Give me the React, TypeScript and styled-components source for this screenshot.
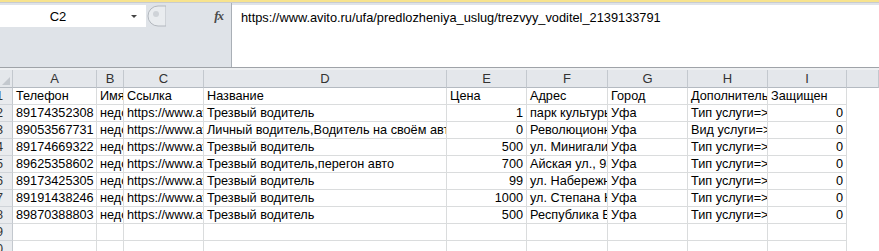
import styled, { createGlobalStyle } from "styled-components";

const GlobalStyle = createGlobalStyle`
    html, body {
        margin: 0;
        padding: 0;
        background: #ffffff;
    }
    body {
        font-family: "Liberation Sans", Arial, sans-serif;
    }
`;

const Page = styled.div`
    width: 879px;
    height: 251px;
    overflow: hidden;
    display: flex;
    flex-direction: column;
    background: #ffffff;
`;

const TopStrip = styled.div`
    height: 2px;
    background: #f7e38e;
    border-bottom: 1px solid #c8cbcf;
    flex: none;
`;

const FormulaBar = styled.div`
    display: grid;
    grid-template-columns: 232px 1fr;
    height: 64px;
    flex: none;
    background: #dfe3e8;
`;

const LeftPanel = styled.div`
    border-right: 1px solid #a9afb6;
    padding-top: 2px;
`;

const NameRow = styled.div`
    display: flex;
    align-items: center;
    height: 22px;
`;

const NameBox = styled.div`
    width: 146px;
    height: 22px;
    background: #ffffff;
    display: flex;
    align-items: center;
    font-size: 13px;
    color: #000;
`;

const NameText = styled.span`
    width: 116px;
    text-align: center;
`;

const DropArrow = styled.span`
    width: 0;
    height: 0;
    margin-left: 15px;
    border-left: 3px solid transparent;
    border-right: 3px solid transparent;
    border-top: 3px solid #444;
`;

const Splitter = styled.svg`
    display: block;
    flex: none;
`;

const Fx = styled.span`
    margin-left: auto;
    margin-right: 8px;
    font-family: "Liberation Serif", serif;
    font-style: italic;
    font-weight: bold;
    font-size: 13px;
    color: #4a4a4a;
    letter-spacing: -1px;
`;

const FormulaInput = styled.div`
    background: #ffffff;
    margin-top: 2px;
    padding: 5px 0 0 9px;
    font-size: 12.8px;
    color: #000;
    white-space: nowrap;
`;

const Divider = styled.div`
    height: 2px;
    flex: none;
    border-top: 1px solid #9fa3a8;
    background: #eef0f2;
`;

const Sheet = styled.div`
    display: grid;
    grid-template-columns: 13px 84px 27px 80px 243px 80px 81px 80px 80px 79px 1fr;
    grid-auto-rows: 17px;
    grid-template-rows: 18px;
    font-size: 12.7px;
`;

const ColHead = styled.div`
    box-sizing: border-box;
    background: #e4e7eb;
    border-right: 1px solid #c3c8ce;
    border-bottom: 1px solid #b4bac1;
    display: flex;
    align-items: center;
    justify-content: center;
    font-size: 13px;
    color: #333;
    overflow: hidden;
`;

const Corner = styled(ColHead)`
    justify-content: flex-end;
    align-items: flex-end;
    padding: 0 2px 2px 0;
`;

const RowHead = styled.div`
    box-sizing: border-box;
    background: #e9ebee;
    border-right: 1px solid #c3c8ce;
    border-bottom: 1px solid #d0d4d9;
    overflow: hidden;
    white-space: nowrap;
    display: flex;
    justify-content: flex-end;
    padding-right: 9px;
    line-height: 16px;
    font-size: 12.7px;
    color: #333;
`;

const Cell = styled.div<{ $num?: boolean; $bare?: boolean }>`
    box-sizing: border-box;
    border-right: ${(p) => (p.$bare ? "none" : "1px solid #dadcdd")};
    border-bottom: ${(p) => (p.$bare ? "none" : "1px solid #dadcdd")};
    overflow: hidden;
    white-space: nowrap;
    line-height: 16px;
    padding: 0 ${(p) => (p.$num ? "3px" : "0")} 0 ${(p) => (p.$num ? "0" : "3px")};
    text-align: ${(p) => (p.$num ? "right" : "left")};
    color: #000;
`;

const columns = ["A", "B", "C", "D", "E", "F", "G", "H", "I", ""];
const numeric = [false, false, false, false, true, false, false, false, true];

const header = ["Телефон", "Имя", "Ссылка", "Название", "Цена", "Адрес", "Город", "Дополнительно", "Защищен"];

const rows: string[][] = [
    header,
    ["89174352308", "недоступно", "https://www.avito.ru/ufa/predlozheniya_uslug", "Трезвый водитель", "1", "парк культуры и отдыха", "Уфа", "Тип услуги=>Трезвый водитель", "0"],
    ["89053567731", "недоступно", "https://www.avito.ru/ufa/predlozheniya_uslug", "Личный водитель,Водитель на своём авто", "0", "Революционная ул., 1", "Уфа", "Вид услуги=>Водитель", "0"],
    ["89174669322", "недоступно", "https://www.avito.ru/ufa/predlozheniya_uslug", "Трезвый водитель", "500", "ул. Минигали Губайдуллина", "Уфа", "Тип услуги=>Трезвый водитель", "0"],
    ["89625358602", "недоступно", "https://www.avito.ru/ufa/predlozheniya_uslug", "Трезвый водитель,перегон авто", "700", "Айская ул., 93", "Уфа", "Тип услуги=>Трезвый водитель", "0"],
    ["89173425305", "недоступно", "https://www.avito.ru/ufa/predlozheniya_uslug", "Трезвый водитель", "99", "ул. Набережная", "Уфа", "Тип услуги=>Трезвый водитель", "0"],
    ["89191438246", "недоступно", "https://www.avito.ru/ufa/predlozheniya_uslug", "Трезвый водитель", "1000", "ул. Степана Кувыкина", "Уфа", "Тип услуги=>Трезвый водитель", "0"],
    ["89870388803", "недоступно", "https://www.avito.ru/ufa/predlozheniya_uslug", "Трезвый водитель", "500", "Республика Башкортостан", "Уфа", "Тип услуги=>Трезвый водитель", "0"],
    ["", "", "", "", "", "", "", "", ""],
    ["", "", "", "", "", "", "", "", ""],
];

const App = () => {
    return (
        <>
            <GlobalStyle />
            <Page>
                <TopStrip />
                <FormulaBar>
                    <LeftPanel>
                        <NameRow>
                            <NameBox>
                                <NameText>C2</NameText>
                                <DropArrow />
                            </NameBox>
                            <Splitter width="20" height="22" viewBox="0 0 20 22">
                                <path d="M12 1 A10 10 0 0 0 12 21 L20 21 L20 1 Z" fill="#e9ecef" stroke="#b3b8be" />
                                <circle cx="10" cy="9" r="3" fill="#cfd3d8" />
                            </Splitter>
                            <Fx>fx</Fx>
                        </NameRow>
                    </LeftPanel>
                    <FormulaInput>https://www.avito.ru/ufa/predlozheniya_uslug/trezvyy_voditel_2139133791</FormulaInput>
                </FormulaBar>
                <Divider />
                <Sheet>
                    <Corner>
                        <svg width="8" height="8" viewBox="0 0 8 8">
                            <path d="M8 0 L8 8 L0 8 Z" fill="#c3c8ce" />
                        </svg>
                    </Corner>
                    {columns.map((c, i) => (
                        <ColHead key={"h" + i}>{c}</ColHead>
                    ))}
                    {rows.map((r, ri) => (
                        <>
                            <RowHead key={"r" + ri}>{ri + 1}</RowHead>
                            {r.map((v, ci) => (
                                <Cell key={ri + "-" + ci} $num={ri > 0 && numeric[ci]}>
                                    {v}
                                </Cell>
                            ))}
                            <Cell key={ri + "-j"} $bare />
                        </>
                    ))}
                </Sheet>
            </Page>
        </>
    );
};

export default App;
